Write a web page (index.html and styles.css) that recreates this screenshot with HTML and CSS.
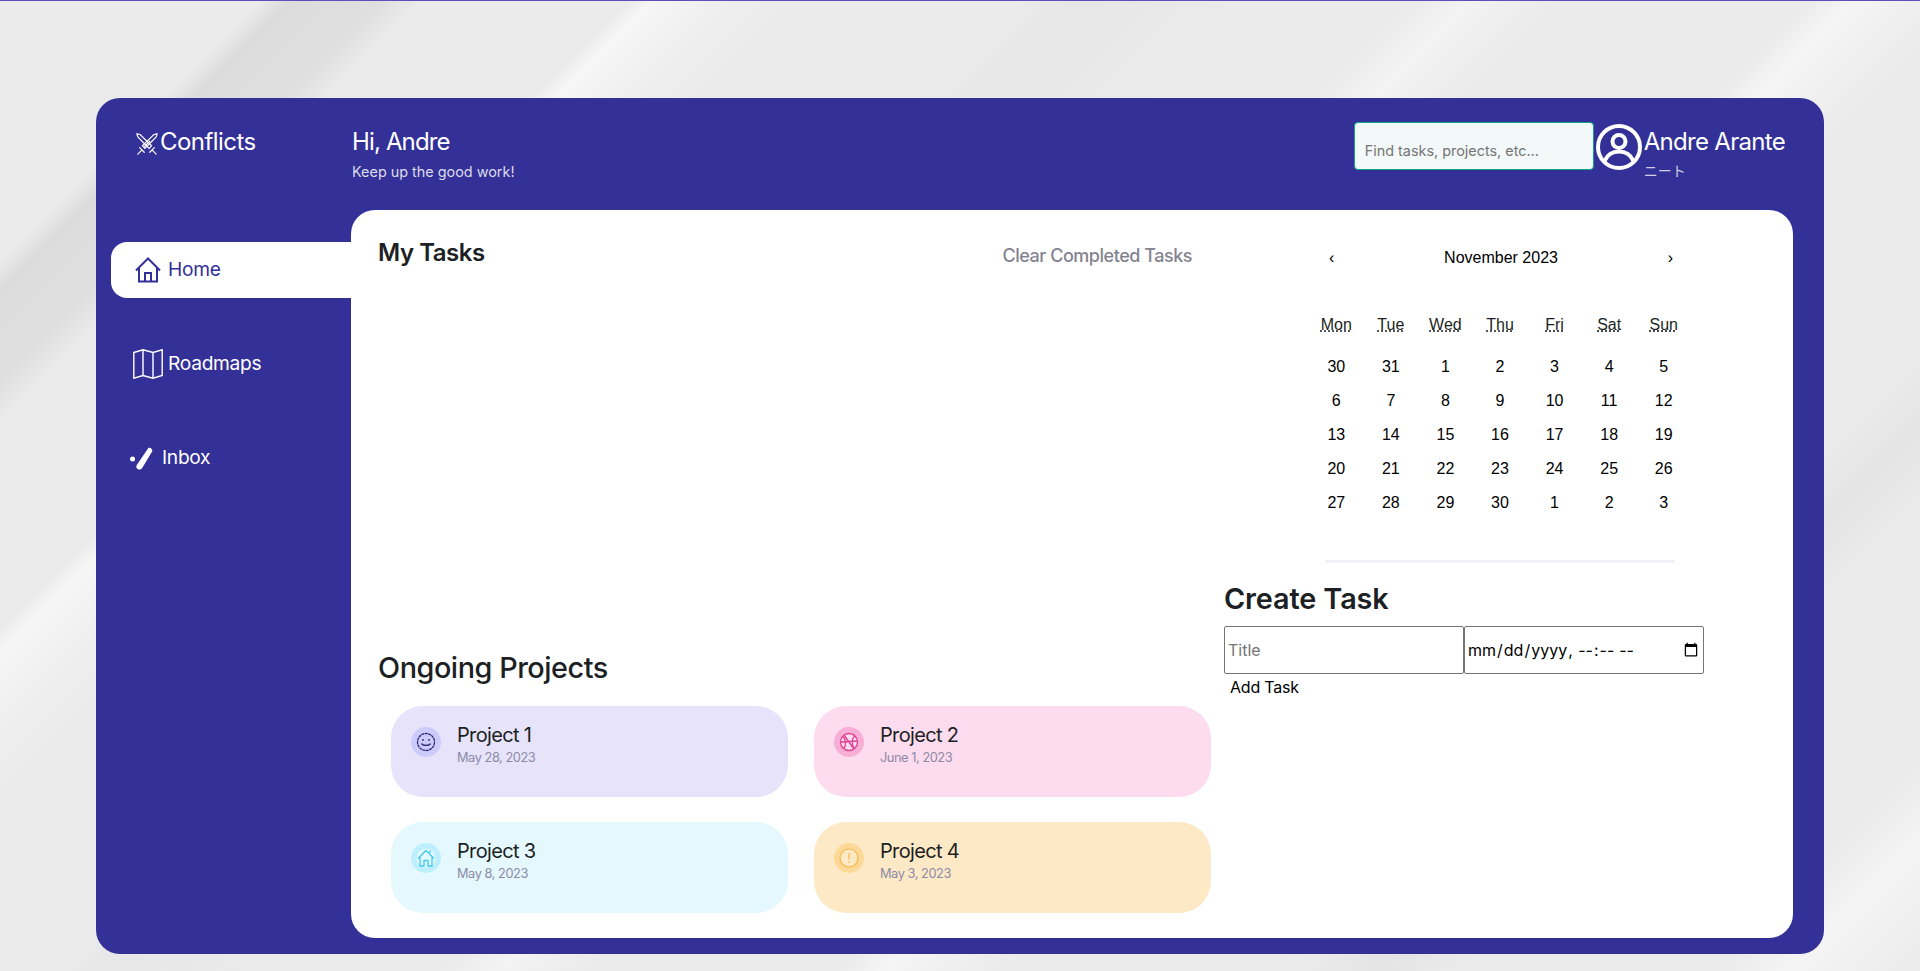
FILE: index.html
```html
<!DOCTYPE html>
<html lang="en">
<head>
<meta charset="utf-8">
<title>Conflicts</title>
<link rel="stylesheet" href="styles.css">
</head>
<body>
<div class="shell">
  <div class="brand">
    <svg class="brand-icon" viewBox="0 0 24 24" fill="none" stroke="currentColor" stroke-width="1.3" stroke-linecap="round">
      <path d="M1 1l3.5.6L17 14l-2.7 2.7L2 4.4z"/><path d="M23 1l-3.5.6L7 14l2.7 2.7L22 4.4z"/>
      <path d="M4 16l5 5M20 16l-5 5M6 19l-4 4M18 19l4 4M9 15l6-6"/>
    </svg>
    <span>Conflicts</span>
  </div>
  <header class="topbar">
    <div class="greeting">
      <h1>Hi, Andre</h1>
      <p>Keep up the good work!</p>
    </div>
    <div class="top-right">
      <input class="search" type="text" placeholder="Find tasks, projects, etc...">
      <svg class="avatar" viewBox="0 0 46 46" fill="none" stroke="currentColor" stroke-width="4">
        <circle cx="23" cy="23" r="21"/><circle cx="23" cy="17.5" r="6.5"/>
        <path d="M8.5 37c3-6.500 8-9.500 14.500-9.500S34.500 30.500 37.500 37"/>
      </svg>
      <div class="user">
        <div class="user-name">Andre Arante</div>
        <div class="user-role">ニート</div>
      </div>
    </div>
  </header>
  <nav class="nav">
    <a class="nav-item active">
      <svg class="icon-home" viewBox="0 0 26 26" fill="none" stroke="currentColor" stroke-width="2">
        <path d="M1 13.500L13 1.500 25 13.500"/><path d="M4 10.500V24.500H22V10.500"/><path d="M10 24.500V16H16V24.500"/>
      </svg>
      <span class="nav-label">Home</span>
    </a>
    <a class="nav-item">
      <svg class="icon-map" viewBox="0 0 30 30" fill="none" stroke="currentColor" stroke-width="1.400">
        <path d="M.8 3.500L10 .8l10 2.700L29.200.8V26.500L20 29.200 10 26.500.8 29.200z"/><path d="M10 .8V26.500M20 3.500V29.200"/>
      </svg>
      <span class="nav-label">Roadmaps</span>
    </a>
    <a class="nav-item">
      <svg class="icon-pen" viewBox="0 0 23 23" fill="currentColor">
        <circle cx="2.500" cy="12" r="2.500"/>
        <path d="M18.500 .8c2 -.5 4.300 1.200 3.800 3.500L12.500 20.500c-1.200 2-3 2.500-4.500 1.700s-2.300-2.400-1.200-4.200z"/>
      </svg>
      <span class="nav-label">Inbox</span>
    </a>
  </nav>
  <main class="main">
    <div class="left">
      <div class="tasks-head">
        <h2 class="tasks-title">My Tasks</h2>
        <span class="clear">Clear Completed Tasks</span>
      </div>
      <h2 class="projects-title">Ongoing Projects</h2>
      <div class="projects">
        <article class="card card-purple">
          <div class="badge badge-purple">
            <svg viewBox="0 0 20 20" fill="none" stroke="#2e2a78" stroke-width="1.300"><circle cx="10" cy="10" r="8.500" stroke-dasharray="3 .5"/><circle cx="7" cy="8" r=".9" fill="#2e2a78" stroke="none"/><circle cx="13" cy="8" r=".9" fill="#2e2a78" stroke="none"/><path d="M5.500 11.500c1 2.500 8 2.500 9 0"/></svg>
          </div>
          <div><div class="card-title">Project 1</div><div class="card-date">May 28, 2023</div></div>
        </article>
        <article class="card card-pink">
          <div class="badge badge-pink">
            <svg viewBox="0 0 20 20" fill="none" stroke="#e0408f" stroke-width="1.300"><circle cx="10" cy="10" r="8.500" fill="#fcdcee"/><path d="M4 4.500c3 3 3.500 8 1 12M16 3.500c-3 3-3.500 8-1 13M2 10l16-1M5 3l10 14"/></svg>
          </div>
          <div><div class="card-title">Project 2</div><div class="card-date">June 1, 2023</div></div>
        </article>
        <article class="card card-blue">
          <div class="badge badge-blue">
            <svg viewBox="0 0 20 20" fill="none" stroke="#3ec9f5" stroke-width="1.300"><circle cx="10" cy="10" r="9.500" fill="#e4f8fd" stroke="none"/><path d="M2 10.500L10 2.500l8 8M4 8.500V18H8V12.500H12V18H16V8.500M14 5V2.500"/></svg>
          </div>
          <div><div class="card-title">Project 3</div><div class="card-date">May 8, 2023</div></div>
        </article>
        <article class="card card-amber">
          <div class="badge badge-amber">
            <svg viewBox="0 0 20 20" fill="none" stroke="#fbb544" stroke-width="1.200"><circle cx="10" cy="10" r="9" fill="#fde9c6"/><path d="M10 5v6.500M10 13.500v1.500"/></svg>
          </div>
          <div><div class="card-title">Project 4</div><div class="card-date">May 3, 2023</div></div>
        </article>
      </div>
    </div>
    <aside class="right">
      <section class="calendar">
        <div class="cal-head"><span>‹</span><span>November 2023</span><span>›</span></div>
        <div class="cal-days">
          <abbr>Mon</abbr><abbr>Tue</abbr><abbr>Wed</abbr><abbr>Thu</abbr><abbr>Fri</abbr><abbr>Sat</abbr><abbr>Sun</abbr>
        </div>
        <div class="cal-grid">
          <span>30</span><span>31</span><span>1</span><span>2</span><span>3</span><span>4</span><span>5</span>
          <span>6</span><span>7</span><span>8</span><span>9</span><span>10</span><span>11</span><span>12</span>
          <span>13</span><span>14</span><span>15</span><span>16</span><span>17</span><span>18</span><span>19</span>
          <span>20</span><span>21</span><span>22</span><span>23</span><span>24</span><span>25</span><span>26</span>
          <span>27</span><span>28</span><span>29</span><span>30</span><span>1</span><span>2</span><span>3</span>
        </div>
      </section>
      <hr class="divider">
      <section class="create">
        <h2 class="create-title">Create Task</h2>
        <div class="form-row">
          <input class="field field-title" type="text" placeholder="Title">
          <input class="field" type="datetime-local">
        </div>
        <button class="add" type="button">Add Task</button>
      </section>
    </aside>
  </main>
</div>
</body>
</html>
```
FILE: styles.css
```css
* { box-sizing: border-box; }
html, body { margin: 0; height: 100%; }
body {
  height: 971px;
  overflow: hidden;
  border-top: 1px solid #5a50bd;
  font-family: Inter, "Noto Sans CJK JP", sans-serif;
  color: #1c1f23;
  padding-top: 97px;
  background-color: #ebebeb;
  background-image:
    linear-gradient(135deg,
      #ebebeb 0, #ebebeb 185px, #dcdcdc 205px, #dfdfdf 270px, #ebebeb 300px,
      #ebebeb 445px, #f6f6f6 462px, #eeeeee 520px, #ebebeb 560px,
      #ebebeb 720px, #e7e7e7 760px, #e9e9e9 830px, #ebebeb 880px,
      #ebebeb 1000px, #f3f3f3 1040px, #ebebeb 1100px,
      #ebebeb 1280px, #f5f5f5 1310px, #eaeaea 1400px,
      #ebebeb 1600px, #e4e4e4 1660px, #ebebeb 1720px,
      #ebebeb 1900px, #f4f4f4 1950px, #ebebeb 2044px);
}
.shell {
  width: 1728px;
  height: 856px;
  margin-left: 96px;
  padding: 0 31px 16px 0;
  background: #333098;
  border-radius: 24px;
  display: grid;
  grid-template-columns: 255px 1fr;
  grid-template-rows: 112px 1fr;
  color: #fff;
}
.brand {
  display: flex;
  align-items: flex-start;
  gap: 2px;
  padding: 29px 0 0 40px;
  font-size: 24px;
  line-height: 29px;
  letter-spacing: -.55px;
}
.brand-icon { width: 22px; height: 22px; margin-top: 6px; }
.topbar { display: flex; justify-content: space-between; align-items: flex-start; padding-right: 8px; }
.greeting { padding: 29px 0 0 1px; }
.greeting h1 { margin: 0; font-size: 24px; line-height: 29px; font-weight: 400; letter-spacing: -.85px; }
.greeting p { margin: 7px 0 0; font-size: 14.4px; line-height: 17px; color: #dcdbe9; }
.top-right { display: flex; align-items: flex-start; gap: 2px; padding-top: 24px; }
.search {
  width: 240px;
  height: 48px;
  padding: 8px 0 0 10px;
  border: 1px solid #10a37f;
  border-radius: 4px;
  background: #f3f8f9;
  font: 14.4px Inter, sans-serif;
  color: #1c1f23;
}
.search::placeholder { color: #757575; opacity: 1; }
.avatar { width: 46px; height: 46px; margin-top: 2px; }
.user-name { padding-top: 5px; font-size: 24px; line-height: 29px; letter-spacing: -.7px; }
.user-role { margin-top: 6px; font-size: 14px; line-height: 18px; color: #cfcee3; }
.nav { display: flex; flex-direction: column; gap: 38px; padding: 32px 0 0 15px; }
.nav-item { display: flex; align-items: center; height: 56px; padding-left: 15px; font-size: 19.2px; letter-spacing: -.3px; color: #fff; }
.nav-item.active { background: #fff; color: #333098; border-radius: 16px 0 0 16px; }
.nav-label { padding-bottom: 2px; }
.icon-home { width: 26px; height: 26px; margin: 0 7px 0 9px; }
.icon-map { width: 30px; height: 30px; margin: 0 5px 0 7px; }
.icon-pen { width: 23px; height: 23px; margin: 0 9px 0 4px; }
.main {
  display: flex;
  background: #fff;
  border-radius: 24px;
  color: #1c1f23;
}
.left { width: 873px; padding: 27px 0 0 27px; }
.tasks-head { display: flex; justify-content: space-between; align-items: flex-start; width: 814px; }
.tasks-title { margin: 0; font-size: 24px; line-height: 32px; font-weight: 600; letter-spacing: -.45px; }
.clear { margin-top: 8px; font-size: 18px; line-height: 22px; font-weight: 500; letter-spacing: -.47px; color: #84838f; }
.projects-title { margin: 381px 0 0; font-size: 28.8px; line-height: 36px; font-weight: 500; letter-spacing: -.45px; }
.projects {
  display: grid;
  grid-template-columns: 397px 397px;
  grid-auto-rows: 91px;
  gap: 25px 26px;
  margin: 20px 0 0 13px;
}
.card { display: flex; align-items: flex-start; gap: 16px; padding: 21px 20px 0; border-radius: 32px; }
.card-purple { background: #e6e3fb; }
.card-pink { background: #fcdcee; }
.card-blue { background: #e4f8fd; }
.card-amber { background: #fde9c6; }
.badge { width: 30px; height: 30px; border-radius: 50%; display: flex; align-items: center; justify-content: center; }
.badge svg { width: 20px; height: 20px; }
.badge-purple { background: #cdcafc; }
.badge-pink { background: #f8aed6; }
.badge-blue { background: #bdefff; }
.badge-amber { background: #fdd998; }
.card-title { margin-top: -4px; font-size: 20px; line-height: 24px; letter-spacing: -.65px; }
.card-date { margin-top: 3px; font-size: 12.8px; line-height: 16px; letter-spacing: -.45px; color: #8d8ba7; }
.right { flex: 1; }
.calendar { width: 382px; margin-left: 85px; font-family: "Liberation Sans", Arial, sans-serif; color: #000; }
.cal-head {
  display: flex;
  justify-content: space-between;
  align-items: center;
  height: 96px;
  padding: 0 18px 0 20px;
  font-size: 16px;
}
.cal-days, .cal-grid {
  display: grid;
  grid-template-columns: repeat(7, 1fr);
  grid-auto-rows: 34px;
  font-size: 16px;
  text-align: center;
  align-items: center;
}
.cal-days { margin: 2px 0 8px; }
.cal-days abbr { text-decoration: underline dotted; color: #1c1f23; }
.divider { width: 350px; height: 3px; margin: 40px 0 0 101px; border: 0; background: #f3f2f8; }
.create { margin-top: 16px; }
.create-title { margin: 0; font-size: 28.8px; line-height: 39px; font-weight: 600; letter-spacing: -.1px; }
.form-row { display: flex; margin-top: 8px; }
.field {
  width: 240px;
  height: 48px;
  padding: 1px 2px;
  border: 1px solid #767676;
  border-radius: 2px;
  background: #fff;
  font: 16px Inter, sans-serif;
  color: #000;
}
.field-title { padding-left: 3px; }
.add { display: block; padding: 3px 6px; border: 0; background: none; font: 16px/20px Inter, sans-serif; letter-spacing: -.2px; color: #000; }
```
